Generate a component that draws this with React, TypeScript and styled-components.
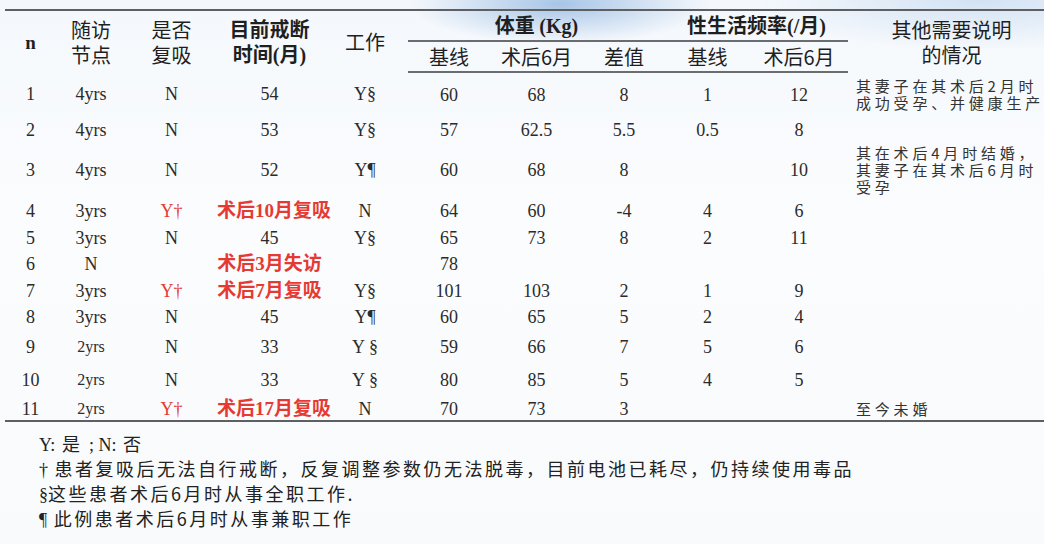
import styled, { createGlobalStyle } from "styled-components";

const GlobalStyle = createGlobalStyle`
  html, body {
    margin: 0;
    padding: 0;
    width: 1044px;
    height: 544px;
    overflow: hidden;
  }
  body {
    font-family: "Liberation Serif", "Noto Sans CJK SC", serif;
    color: #2b2b2b;
    background:
      radial-gradient(ellipse 150px 40px at 560px 4px, rgba(105, 155, 212, 0.55), rgba(105, 155, 212, 0) 100%),
      radial-gradient(ellipse 220px 50px at 980px 0px, rgba(170, 200, 232, 0.45), rgba(170, 200, 232, 0) 100%),
      linear-gradient(180deg, #f4f8fc 0%, #fbfcfe 40%, #f9fafb 100%);
  }
`;

const Page = styled.div`
  padding: 9px 0 0 5px;
  width: 1044px;
  overflow: hidden;
`;

const Table = styled.table`
  border-collapse: collapse;
  table-layout: fixed;
  width: 1050px;
  border-top: 2px solid #5d5f63;
  border-bottom: 2px solid #5d5f63;
`;

const HeadCell = styled.th<{ $bold?: boolean; $rule?: boolean }>`
  font-family: "Noto Sans CJK SC", "Liberation Sans", sans-serif;
  font-size: 20px;
  font-weight: ${(p) => (p.$bold ? 700 : 400)};
  line-height: 25px;
  color: #1f1f1f;
  text-align: center;
  vertical-align: middle;
  padding: 0;
  height: 29px;
  border-bottom: ${(p) => (p.$rule ? "2px solid #6a6c70" : "none")};
`;

const HeadRow = styled.tr`
  &:last-child th {
    border-bottom: 2px solid #6a6c70;
  }
`;

const Latin = styled.span`
  font-family: "Liberation Serif", serif;
  font-weight: 700;
`;

const NHead = styled.span`
  font-family: "Liberation Serif", serif;
  font-weight: 700;
  font-size: 19px;
`;

const Row = styled.tr<{ $h: number }>`
  height: ${(p) => p.$h}px;
`;

const Cell = styled.td<{ $red?: boolean; $small?: boolean }>`
  font-family: "Liberation Serif", "Noto Sans CJK SC", serif;
  font-size: ${(p) => (p.$small ? 16 : 18)}px;
  line-height: 20px;
  color: ${(p) => (p.$red ? "#e53a33" : "#2b2b2b")};
  text-align: center;
  vertical-align: middle;
  padding: 0;
  white-space: nowrap;
`;

const RedNote = styled.td`
  font-family: "Liberation Serif", "Noto Sans CJK SC", serif;
  font-size: 19px;
  font-weight: 700;
  line-height: 20px;
  color: #e53a33;
  text-align: center;
  vertical-align: middle;
  padding: 0;
  white-space: nowrap;
`;

const NoteCell = styled.td`
  font-family: "Noto Sans CJK SC", sans-serif;
  font-size: 15px;
  line-height: 17px;
  letter-spacing: 3.8px;
  color: #333;
  text-align: left;
  vertical-align: middle;
  padding: 0 0 0 8px;
  white-space: nowrap;
  overflow: hidden;
`;

const NoteLine = styled.div`
  height: 17px;
`;

const Footnotes = styled.div`
  padding: 9px 0 0 34px;
  display: flex;
  flex-direction: column;
  font-family: "Noto Sans CJK SC", sans-serif;
  font-size: 18px;
  line-height: 25px;
  letter-spacing: 2.5px;
  color: #222;
`;

const FootLine = styled.div`
  height: 25px;
`;

const Serif = styled.span`
  font-family: "Liberation Serif", serif;
  letter-spacing: 0;
`;

type RowData = {
  h: number;
  n: string;
  node: string;
  small?: boolean;
  relapse: string;
  relapseRed?: boolean;
  months: string;
  monthsRed?: boolean;
  work: string;
  w0: string;
  w6: string;
  diff: string;
  s0: string;
  s6: string;
  note?: string[];
};

const rows: RowData[] = [
  { h: 44, n: "1", node: "4yrs", relapse: "N", months: "54", work: "Y§", w0: "60", w6: "68", diff: "8", s0: "1", s6: "12", note: ["其妻子在其术后2月时", "成功受孕、并健康生产"] },
  { h: 28, n: "2", node: "4yrs", relapse: "N", months: "53", work: "Y§", w0: "57", w6: "62.5", diff: "5.5", s0: "0.5", s6: "8" },
  { h: 48, n: "3", node: "4yrs", relapse: "N", months: "52", work: "Y¶", w0: "60", w6: "68", diff: "8", s0: "", s6: "10", note: ["其在术后4月时结婚，", "其妻子在其术后6月时", "受孕"] },
  { h: 32, n: "4", node: "3yrs", relapse: "Y†", relapseRed: true, months: "术后10月复吸", monthsRed: true, work: "N", w0: "64", w6: "60", diff: "-4", s0: "4", s6: "6" },
  { h: 22, n: "5", node: "3yrs", relapse: "N", months: "45", work: "Y§", w0: "65", w6: "73", diff: "8", s0: "2", s6: "11" },
  { h: 30, n: "6", node: "N", relapse: "", months: "术后3月失访", monthsRed: true, work: "", w0: "78", w6: "", diff: "", s0: "", s6: "" },
  { h: 24, n: "7", node: "3yrs", relapse: "Y†", relapseRed: true, months: "术后7月复吸", monthsRed: true, work: "Y§", w0: "101", w6: "103", diff: "2", s0: "1", s6: "9" },
  { h: 28, n: "8", node: "3yrs", relapse: "N", months: "45", work: "Y¶", w0: "60", w6: "65", diff: "5", s0: "2", s6: "4" },
  { h: 32, n: "9", node: "2yrs", small: true, relapse: "N", months: "33", work: "Y §", w0: "59", w6: "66", diff: "7", s0: "5", s6: "6" },
  { h: 34, n: "10", node: "2yrs", small: true, relapse: "N", months: "33", work: "Y §", w0: "80", w6: "85", diff: "5", s0: "4", s6: "5" },
  { h: 24, n: "11", node: "2yrs", small: true, relapse: "Y†", relapseRed: true, months: "术后17月复吸", monthsRed: true, work: "N", w0: "70", w6: "73", diff: "3", s0: "", s6: "", note: ["至今未婚"] },
];

const widths = [51, 70, 91, 105, 86, 82, 93, 82, 85, 98, 207];

export default function App() {
  return (
    <>
      <GlobalStyle />
      <Page>
        <Table>
          <colgroup>
            {widths.map((w, i) => (
              <col key={i} style={{ width: w }} />
            ))}
          </colgroup>
          <thead>
            <HeadRow>
              <HeadCell rowSpan={2}>
                <NHead>n</NHead>
              </HeadCell>
              <HeadCell rowSpan={2}>
                随访
                <br />
                节点
              </HeadCell>
              <HeadCell rowSpan={2}>
                是否
                <br />
                复吸
              </HeadCell>
              <HeadCell rowSpan={2} $bold>
                目前戒断
                <br />
                时间<Latin>(</Latin>月<Latin>)</Latin>
              </HeadCell>
              <HeadCell rowSpan={2}>工作</HeadCell>
              <HeadCell colSpan={3} $bold $rule>
                体重 <Latin>(Kg)</Latin>
              </HeadCell>
              <HeadCell colSpan={2} $bold $rule>
                性生活频率<Latin>(/</Latin>月<Latin>)</Latin>
              </HeadCell>
              <HeadCell rowSpan={2}>
                其他需要说明
                <br />
                的情况
              </HeadCell>
            </HeadRow>
            <HeadRow>
              <HeadCell>基线</HeadCell>
              <HeadCell>术后6月</HeadCell>
              <HeadCell>差值</HeadCell>
              <HeadCell>基线</HeadCell>
              <HeadCell>术后6月</HeadCell>
            </HeadRow>
          </thead>
          <tbody>
            {rows.map((r) => (
              <Row key={r.n} $h={r.h}>
                <Cell>{r.n}</Cell>
                <Cell $small={r.small}>{r.node}</Cell>
                <Cell $red={r.relapseRed}>{r.relapse}</Cell>
                {r.monthsRed ? <RedNote>{r.months}</RedNote> : <Cell>{r.months}</Cell>}
                <Cell>{r.work}</Cell>
                <Cell>{r.w0}</Cell>
                <Cell>{r.w6}</Cell>
                <Cell>{r.diff}</Cell>
                <Cell>{r.s0}</Cell>
                <Cell>{r.s6}</Cell>
                <NoteCell>
                  {r.note?.map((line) => (
                    <NoteLine key={line}>{line}</NoteLine>
                  ))}
                </NoteCell>
              </Row>
            ))}
          </tbody>
        </Table>
        <Footnotes>
          <FootLine>
            <Serif>Y:</Serif> 是 <Serif>; N:</Serif> 否
          </FootLine>
          <FootLine>
            <Serif>†</Serif> 患者复吸后无法自行戒断，反复调整参数仍无法脱毒，目前电池已耗尽，仍持续使用毒品
          </FootLine>
          <FootLine>
            <Serif>§</Serif>这些患者术后6月时从事全职工作.
          </FootLine>
          <FootLine>
            <Serif>¶</Serif> 此例患者术后6月时从事兼职工作
          </FootLine>
        </Footnotes>
      </Page>
    </>
  );
}
